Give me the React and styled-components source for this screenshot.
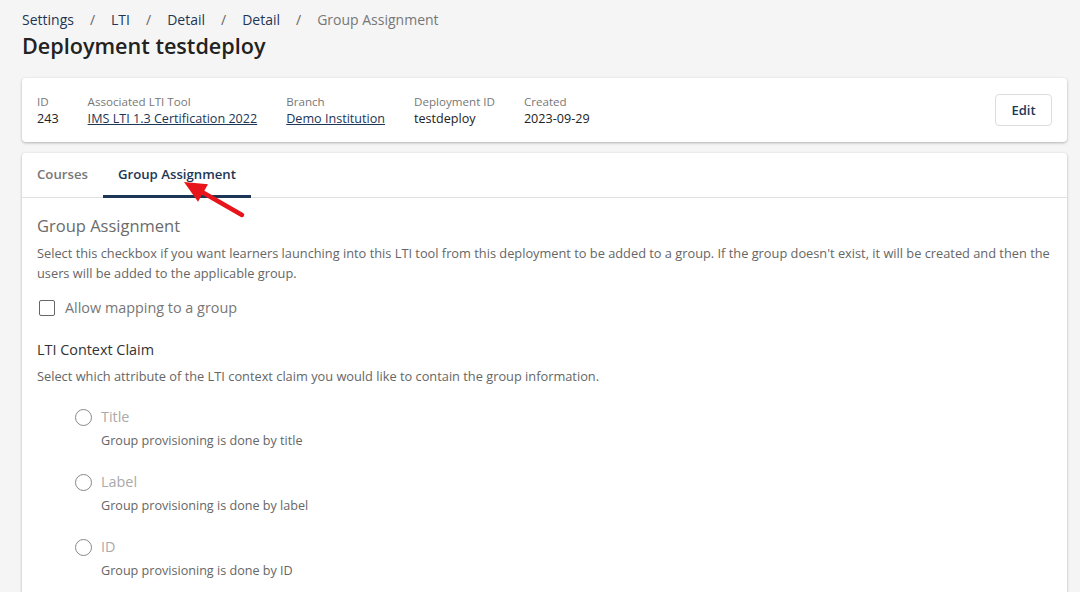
import React from 'react';
import styled, { createGlobalStyle } from 'styled-components';

const Global = createGlobalStyle`
  body {
    margin: 0;
    background: #f5f5f5;
    font-family: "Open Sans", "Liberation Sans", sans-serif;
    color: #333;
  }
`;

const Page = styled.div`
  position: relative;
  padding: 10px 13px 0 22px;
  height: 592px;
  box-sizing: border-box;
  overflow: hidden;
`;

const Crumbs = styled.nav`
  display: flex;
  align-items: center;
  font-size: 14px;
  line-height: 20px;
`;

const Crumb = styled.span`
  color: ${p => (p.current ? '#777' : '#1d3656')};
`;

const Sep = styled.span`
  color: #666;
  margin: 0 16px;
`;

const Title = styled.h1`
  margin: 1px 0 0;
  font-size: 21.6px;
  font-weight: 600;
  line-height: 30px;
  color: #222;
`;

const Card = styled.div`
  background: #fff;
  border-radius: 4px;
  box-shadow: 0 1px 3px rgba(0, 0, 0, 0.28);
`;

const InfoCard = styled(Card)`
  margin-top: 17px;
  display: flex;
  align-items: center;
  justify-content: space-between;
  padding: 0 15px;
  height: 64px;
`;

const Fields = styled.div`
  display: flex;
  gap: 29px;
`;

const Field = styled.div`
  display: flex;
  flex-direction: column;
`;

const FieldLabel = styled.span`
  font-size: 11.6px;
  line-height: 17px;
  color: #777;
`;

const FieldValue = styled.span`
  font-size: 12.6px;
  line-height: 18px;
  color: ${p => (p.link ? '#1d3656' : '#222')};
  text-decoration: ${p => (p.link ? 'underline' : 'none')};
`;

const EditButton = styled.button`
  font-family: inherit;
  font-size: 13px;
  font-weight: 600;
  color: #1d3656;
  background: #fff;
  border: 1px solid #ddd;
  border-radius: 4px;
  width: 57px;
  height: 32px;
`;

const MainCard = styled(Card)`
  margin-top: 11px;
  height: 460px;
`;

const Tabs = styled.div`
  display: flex;
  padding-left: 15px;
  border-bottom: 1px solid #e2e2e2;
  height: 44px;
`;

const Tab = styled.div`
  font-size: 13.2px;
  font-weight: 600;
  padding: 0 15px 0 ${p => (p.first ? '0' : '15px')};
  display: flex;
  align-items: center;
  color: ${p => (p.active ? '#1d3656' : '#777')};
  border-bottom: 3px solid ${p => (p.active ? '#1d3656' : 'transparent')};
  margin-bottom: -1px;
`;

const Body = styled.div`
  padding: 15px 15px 0;
`;

const SectionTitle = styled.h2`
  margin: 0;
  font-size: 16.5px;
  font-weight: 400;
  line-height: 26px;
  color: #6b6b6b;
`;

const Desc = styled.p`
  margin: ${p => p.gap || 4}px 0 0;
  font-size: 12.8px;
  line-height: 20px;
  color: #666;
`;

const CheckRow = styled.label`
  display: flex;
  align-items: center;
  gap: 10px;
  margin-top: 15px;
  padding-left: 2px;
  font-size: 14.4px;
  color: #777;
`;

const Box = styled.span`
  width: 14px;
  height: 14px;
  border: 1.5px solid #666;
  border-radius: 2px;
`;

const SubTitle = styled.h3`
  margin: 23px 0 0;
  font-size: 14.4px;
  font-weight: 400;
  line-height: 20px;
  color: #333;
`;

const Options = styled.div`
  margin-top: 21px;
  padding-left: 38px;
  display: flex;
  flex-direction: column;
  gap: 21px;
`;

const Option = styled.div`
  display: grid;
  grid-template-columns: 26px auto;
  row-gap: 4px;
`;

const Radio = styled.span`
  width: 15px;
  height: 15px;
  border: 1.5px solid #888;
  border-radius: 50%;
  align-self: center;
`;

const OptionLabel = styled.span`
  font-size: 14.4px;
  line-height: 20px;
  color: #aaa;
`;

const OptionHint = styled.span`
  grid-column: 2;
  font-size: 12.6px;
  line-height: 20px;
  color: #666;
`;

const Arrow = styled.svg`
  position: absolute;
  left: 180px;
  top: 174px;
`;

const options = [
  { label: 'Title', hint: 'Group provisioning is done by title' },
  { label: 'Label', hint: 'Group provisioning is done by label' },
  { label: 'ID', hint: 'Group provisioning is done by ID' },
];

export default function App() {
  return (
    <>
      <Global />
      <Page>
        <Crumbs>
          <Crumb>Settings</Crumb><Sep>/</Sep>
          <Crumb>LTI</Crumb><Sep>/</Sep>
          <Crumb>Detail</Crumb><Sep>/</Sep>
          <Crumb>Detail</Crumb><Sep>/</Sep>
          <Crumb current>Group Assignment</Crumb>
        </Crumbs>
        <Title>Deployment testdeploy</Title>

        <InfoCard>
          <Fields>
            <Field><FieldLabel>ID</FieldLabel><FieldValue>243</FieldValue></Field>
            <Field><FieldLabel>Associated LTI Tool</FieldLabel><FieldValue link>IMS LTI 1.3 Certification 2022</FieldValue></Field>
            <Field><FieldLabel>Branch</FieldLabel><FieldValue link>Demo Institution</FieldValue></Field>
            <Field><FieldLabel>Deployment ID</FieldLabel><FieldValue>testdeploy</FieldValue></Field>
            <Field><FieldLabel>Created</FieldLabel><FieldValue>2023-09-29</FieldValue></Field>
          </Fields>
          <EditButton>Edit</EditButton>
        </InfoCard>

        <MainCard>
          <Tabs>
            <Tab first>Courses</Tab>
            <Tab active>Group Assignment</Tab>
          </Tabs>
          <Body>
            <SectionTitle>Group Assignment</SectionTitle>
            <Desc>
              Select this checkbox if you want learners launching into this LTI tool from this deployment to be added to a group. If the group doesn't exist, it will be created and then the users will be added to the applicable group.
            </Desc>
            <CheckRow><Box />Allow mapping to a group</CheckRow>
            <SubTitle>LTI Context Claim</SubTitle>
            <Desc gap={6}>Select which attribute of the LTI context claim you would like to contain the group information.</Desc>
            <Options>
              {options.map(o => (
                <Option key={o.label}>
                  <Radio />
                  <OptionLabel>{o.label}</OptionLabel>
                  <OptionHint>{o.hint}</OptionHint>
                </Option>
              ))}
            </Options>
          </Body>
        </MainCard>

        <Arrow width="70" height="48" viewBox="0 0 70 48">
          <line x1="62" y1="41" x2="22" y2="18" stroke="#e8141b" strokeWidth="4.5" strokeLinecap="round" />
          <polygon points="4,8 28,10.3 18,27.7" fill="#e8141b" />
        </Arrow>
      </Page>
    </>
  );
}
